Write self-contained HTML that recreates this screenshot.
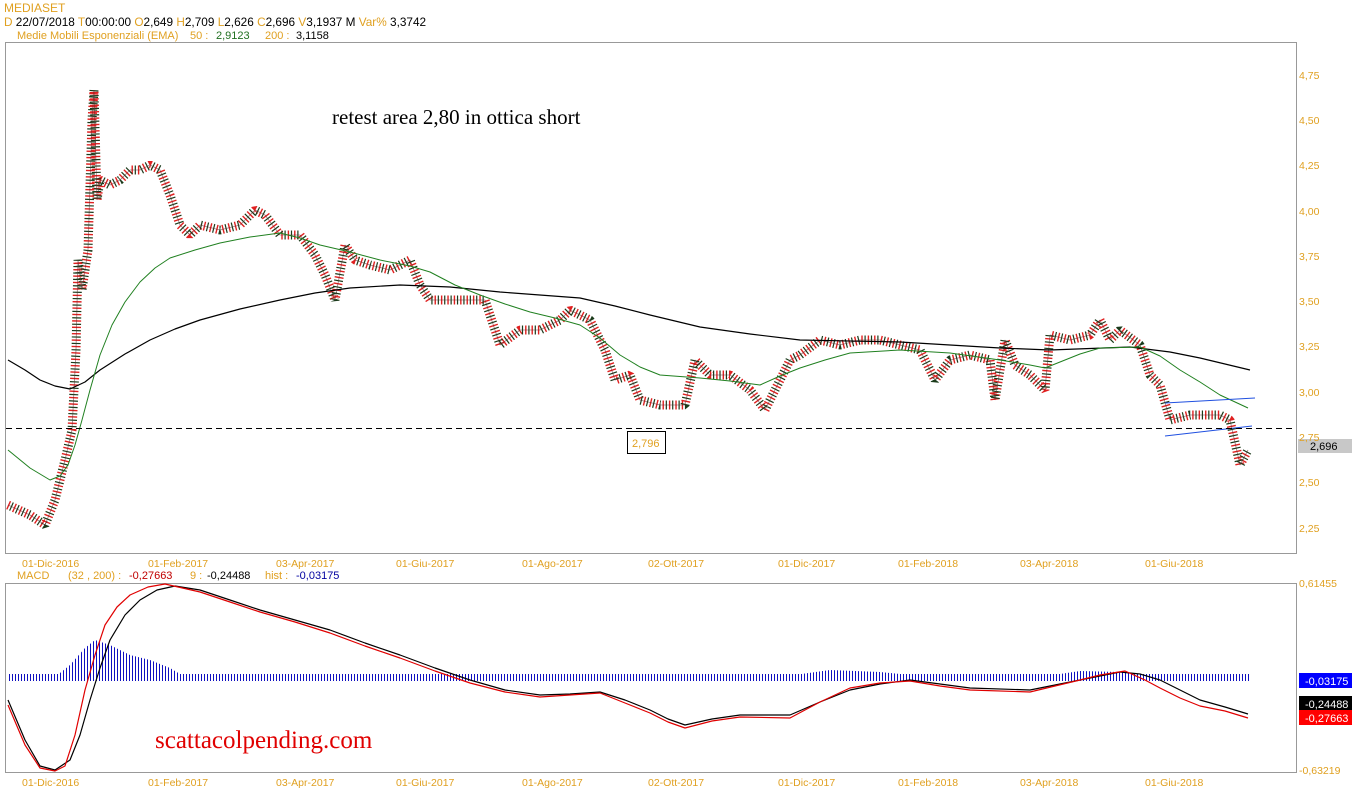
<!DOCTYPE html>
<html><head><meta charset="utf-8"><style>
body{margin:0;background:#fff;width:1352px;height:800px;overflow:hidden;font-family:"Liberation Sans",sans-serif}
svg{position:absolute;left:0;top:0}
</style></head><body>
<svg width="1352" height="800" xmlns="http://www.w3.org/2000/svg" font-family="Liberation Sans, sans-serif">
<defs>
<pattern id="hp" width="3" height="10" patternUnits="userSpaceOnUse"><rect x="0" y="0" width="1" height="10" fill="#1010c0"/></pattern>
<polyline id="pp" points="8,505 30,515 45,525 55,500 65,460 72,430 76,350 78,260 82,290 88,250 92,120 94,90 97,200 100,180 110,185 120,180 130,170 140,170 150,165 160,170 170,195 180,225 190,235 200,225 220,230 240,225 255,210 265,215 280,235 300,235 315,255 325,275 335,300 345,245 355,260 370,265 390,270 410,260 420,285 430,300 450,300 470,300 485,300 500,345 520,330 540,330 560,320 570,310 590,320 605,350 615,380 630,375 640,400 660,405 685,405 695,360 710,375 730,375 750,390 765,410 775,390 790,360 800,355 820,340 840,345 860,340 880,340 900,345 920,350 935,380 950,360 970,355 990,360 995,400 1005,340 1015,365 1030,375 1045,390 1050,335 1070,340 1090,335 1100,320 1110,340 1120,330 1140,345 1150,375 1160,385 1170,420 1190,415 1220,415 1230,420 1240,465 1248,450"/>
</defs>
<rect x="0" y="0" width="1352" height="800" fill="#fff"/>
<text x="4" y="12" font-size="12" fill="#e0a020">MEDIASET</text>
<text x="4" y="26" font-size="11.8" fill="#000"><tspan fill="#e0a020">D</tspan> 22/07/2018 <tspan fill="#e0a020"> T</tspan>00:00:00 <tspan fill="#e0a020">  O</tspan>2,649 <tspan fill="#e0a020"> H</tspan>2,709 <tspan fill="#e0a020"> L</tspan>2,626 <tspan fill="#e0a020"> C</tspan>2,696 <tspan fill="#e0a020"> V</tspan>3,1937 M <tspan fill="#e0a020">  Var%</tspan> 3,3742</text>
<text x="17" y="39" font-size="11" fill="#e0a020">Medie Mobili Esponenziali (EMA)<tspan x="190">50 :</tspan><tspan x="216" fill="#207020">2,9123</tspan><tspan x="265">200 :</tspan><tspan x="296" fill="#000">3,1158</tspan></text>
<rect x="5.5" y="42.5" width="1291" height="511" fill="none" stroke="#999"/>
<rect x="5.5" y="583.5" width="1291" height="189" fill="none" stroke="#999"/>

<g fill="none" stroke-linejoin="bevel">
<use href="#pp" stroke="#e02020" stroke-width="9" stroke-dasharray="1.4,5"/>
<use href="#pp" stroke="#1a3a1a" stroke-width="9" stroke-dasharray="1.2,5.2" stroke-dashoffset="3.2"/>
<use href="#pp" stroke="#5a3030" stroke-width="0.8" opacity="0.6"/>
<polyline stroke="#000" stroke-width="1.2" stroke-linejoin="round" points="8,360 25,370 40,380 55,386 70,389 85,382 100,370 125,354 150,340 175,329 200,320 240,309 280,300 315,293 350,288 400,285 450,287 500,292 580,298 615,306 650,315 700,327 750,334 800,340 900,342 1000,348 1050,350 1130,347 1170,352 1200,358 1250,370"/>
<polyline stroke="#208020" stroke-width="1" stroke-linejoin="round" points="8,450 30,468 50,480 60,476 68,465 75,445 82,420 90,390 100,355 112,325 125,302 140,282 155,268 170,258 195,250 220,243 250,237 280,233 300,238 320,245 350,252 380,260 410,266 430,272 455,285 480,295 505,304 530,312 555,318 580,325 600,338 620,355 640,367 660,375 700,378 730,381 760,385 780,376 800,368 825,360 850,353 900,350 950,353 1000,360 1030,365 1045,368 1060,362 1080,354 1100,348 1140,347 1160,356 1180,370 1200,382 1220,395 1248,408"/>
<line x1="1165" y1="403" x2="1255" y2="398" stroke="#2050e0"/>
<line x1="1165" y1="436" x2="1252" y2="426" stroke="#2050e0"/>
</g>

<rect x="8" y="674" width="1242" height="7" fill="url(#hp)"/>
<polygon points="55,677 70,665 85,648 95,640 110,645 130,655 150,660 170,668 185,677" fill="url(#hp)"/>
<polygon points="780,677 830,670 880,672 930,677" fill="url(#hp)"/>
<polygon points="1040,677 1080,671 1120,672 1160,677" fill="url(#hp)"/>

<g fill="none" stroke-linejoin="round">
<polyline stroke="#000" stroke-width="1.2" points="8,700 25,740 40,766 55,770 70,760 80,735 90,700 100,668 110,640 125,615 140,600 157,590 175,586 200,590 230,600 260,610 295,620 330,630 365,643 400,655 435,668 470,680 505,690 540,695 570,694 600,692 625,700 650,710 668,719 685,725 712,719 740,715 790,715 820,702 850,690 880,684 910,680 940,684 970,688 1030,690 1055,685 1080,680 1100,676 1120,672 1140,674 1160,680 1180,690 1200,700 1225,707 1248,714"/>
<polyline stroke="#e00000" stroke-width="1.2" points="8,705 25,745 40,768 55,771 65,766 75,735 85,690 95,655 105,625 117,607 130,595 148,587 165,584 200,592 230,602 260,612 295,622 330,633 365,646 400,658 435,671 470,683 505,692 540,697 570,695 600,693 625,703 650,713 668,722 685,728 712,721 740,717 790,718 820,702 850,688 880,683 910,681 940,686 970,690 1030,692 1055,686 1080,680 1100,675 1125,671 1145,680 1160,688 1180,698 1200,706 1225,711 1248,718"/>
</g>

<text x="332" y="124" font-size="21" font-family="Liberation Serif, serif" fill="#000">retest area 2,80 in ottica short</text>
<text x="155" y="748" font-size="25" font-family="Liberation Serif, serif" fill="#e00000">scattacolpending.com</text>
<line x1="6" y1="428.5" x2="1296" y2="428.5" stroke="#000" stroke-dasharray="6,4"/>
<rect x="627.5" y="431.5" width="38" height="22" fill="#fff" stroke="#000"/>
<text x="632" y="447" font-size="11" fill="#e0a020">2,796</text>
<rect x="1298" y="439" width="54" height="14" fill="#c8c8c8"/>
<text x="1310" y="450" font-size="11" fill="#000">2,696</text>
<rect x="1299" y="673" width="54" height="15" fill="#0000ff"/>
<text x="1305" y="685" font-size="11" fill="#fff">-0,03175</text>
<rect x="1299" y="696" width="54" height="14" fill="#000"/>
<text x="1305" y="708" font-size="11" fill="#fff">-0,24488</text>
<rect x="1299" y="710" width="54" height="15" fill="#ff0000"/>
<text x="1305" y="722" font-size="11" fill="#fff">-0,27663</text>
<g font-size="10.5" fill="#e0a020">
<text x="1299" y="79">4,75</text><text x="1299" y="124">4,50</text><text x="1299" y="169">4,25</text><text x="1299" y="215">4,00</text><text x="1299" y="260">3,75</text><text x="1299" y="305">3,50</text><text x="1299" y="350">3,25</text><text x="1299" y="396">3,00</text><text x="1299" y="441">2,75</text><text x="1299" y="486">2,50</text><text x="1299" y="532">2,25</text>
<text x="1299" y="587">0,61455</text><text x="1299" y="774">-0,63219</text>
<text x="22" y="567">01-Dic-2016</text><text x="148" y="567">01-Feb-2017</text><text x="276" y="567">03-Apr-2017</text><text x="396" y="567">01-Giu-2017</text><text x="522" y="567">01-Ago-2017</text><text x="648" y="567">02-Ott-2017</text><text x="778" y="567">01-Dic-2017</text><text x="898" y="567">01-Feb-2018</text><text x="1020" y="567">03-Apr-2018</text><text x="1145" y="567">01-Giu-2018</text>
<text x="22" y="786">01-Dic-2016</text><text x="148" y="786">01-Feb-2017</text><text x="276" y="786">03-Apr-2017</text><text x="396" y="786">01-Giu-2017</text><text x="522" y="786">01-Ago-2017</text><text x="648" y="786">02-Ott-2017</text><text x="778" y="786">01-Dic-2017</text><text x="898" y="786">01-Feb-2018</text><text x="1020" y="786">03-Apr-2018</text><text x="1145" y="786">01-Giu-2018</text>
<text x="17" y="579" font-size="11">MACD<tspan x="68">(32 , 200) :</tspan><tspan x="129" fill="#c00000">-0,27663</tspan><tspan x="190">9 :</tspan><tspan x="207" fill="#000">-0,24488</tspan><tspan x="265">hist :</tspan><tspan x="296" fill="#0000a0">-0,03175</tspan></text>
</g>
</svg>
</body></html>
